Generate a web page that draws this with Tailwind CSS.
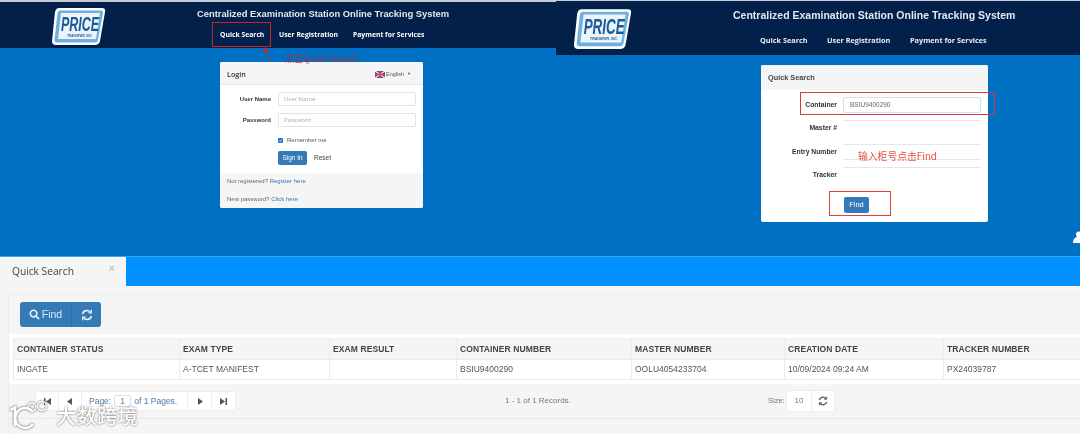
<!DOCTYPE html>
<html>
<head>
<meta charset="utf-8">
<script src="https://cdn.jsdelivr.net/npm/@tailwindcss/browser@4"></script>
</head>
<body class="bg-white m-0">
<div class="relative w-[1080px] h-[434px] overflow-hidden font-['Liberation_Sans',sans-serif] blur-[0.5px]">
  <!-- Top: two screenshots -->
  <div class="grid grid-cols-[556px_524px] h-[256px] bg-[#0070c3]">
    <!-- Left -->
    <div class="flex flex-col">
      <div class="h-[2px] bg-[#c9ced6]"></div>
      <div class="h-[46px] bg-[#03204a] flex items-start">
        <svg class="ml-[51px] mt-[4px] w-[56px] h-[40px]" viewBox="0 0 56 40">
          <path d="M8 2 H51 Q55 2 54 6 L49 35 Q48 39 44 39 H5 Q1 39 1 35 L4 6 Q5 2 8 2Z" fill="#fff"/>
          <path d="M9 4.500 H50 Q52.500 4.500 52 7 L47 34 Q46.500 36.500 44 36.500 H6 Q3.500 36.500 3.500 34 L6.500 7 Q7 4.500 9 4.500Z" fill="#6fb0dc"/>
          <path d="M10 7 H49 L45 33 H7Z" fill="#eaf4fa"/>
          <text transform="translate(10 25) scale(1 1.65)" font-family="Liberation Sans" font-weight="700" font-style="italic" font-size="12.500" fill="#1a5a98">PRICE</text>
          <text transform="translate(16 31) scale(0.9 1)" font-family="Liberation Sans" font-weight="700" font-style="italic" font-size="3.600" fill="#1a5a98">TRANSFER, INC.</text>
        </svg>
        <div class="ml-[90px] w-[252px] flex flex-col items-center">
          <div class="mt-[5px] text-[9.400px] leading-[13px] font-bold text-[#e4e8ee] whitespace-nowrap">Centralized Examination Station Online Tracking System</div>
          <div class="mt-[10px] flex gap-[15px] self-start ml-[23px] text-[6.800px] leading-[10px] font-bold text-white font-['Open_Sans',sans-serif] whitespace-nowrap">
            <span class="w-[44px]">Quick Search</span><span class="w-[59px]">User Registration</span><span>Payment for Services</span>
          </div>
        </div>
      </div>
      <div class="mt-[14px] ml-[220px] w-[203px] h-[146px] bg-white rounded-[2px] flex flex-col overflow-hidden">
        <div class="h-[23px] bg-[#f5f5f5] border-b border-[#e8e8e8] flex items-center justify-between pl-[7px] pr-[12px] pt-[2px] text-[7px] text-[#333]">
          <span class="font-['Open_Sans',sans-serif] font-semibold text-[7.200px]">Login</span>
          <span class="flex items-center gap-[1px] text-[5.500px] text-[#555]">
            <svg class="w-[10px] h-[7px]" viewBox="0 0 10 7"><rect width="10" height="7" rx="1" fill="#5a4a8a"/><path d="M0 0 L10 7 M10 0 L0 7" stroke="#f3d5de" stroke-width="1.400"/><path d="M5 0 V7 M0 3.500 H10" stroke="#d43a5a" stroke-width="1.500"/></svg>
            English <span class="ml-[2px] text-[4px]">▼</span>
          </span>
        </div>
        <div class="flex-1 flex flex-col">
          <div class="mt-[7px] flex items-center h-[14px]">
            <label class="w-[51px] text-right text-[6px] font-bold text-[#333]">User Name</label>
            <div class="ml-[7px] w-[138px] h-[14px] border border-[#e2e2e2] rounded-[2px] pl-[5px] text-[6px] leading-[12px] text-[#aaa] font-['Open_Sans',sans-serif]">User Name</div>
          </div>
          <div class="mt-[7px] flex items-center h-[14px]">
            <label class="w-[51px] text-right text-[6px] font-bold text-[#333]">Password</label>
            <div class="ml-[7px] w-[138px] h-[14px] border border-[#e2e2e2] rounded-[2px] pl-[5px] text-[6px] leading-[12px] text-[#aaa] font-['Open_Sans',sans-serif]">Password</div>
          </div>
          <div class="mt-[9px] ml-[58px] flex items-center h-[8px] text-[6px] text-[#555]">
            <svg class="w-[5px] h-[5px]" viewBox="0 0 5 5"><rect width="5" height="5" rx="1" fill="#1f6fd0"/><path d="M1 2.500 L2.200 3.700 L4 1.300" fill="none" stroke="#fff" stroke-width="0.800"/></svg>
            <span class="ml-[4px]">Remember me</span>
          </div>
          <div class="mt-[7px] ml-[58px] flex items-center h-[14px] gap-[3px] text-[6.500px]">
            <span class="w-[29px] h-[14px] bg-[#337ab7] rounded-[2px] text-white flex items-center justify-center">Sign In</span>
            <span class="w-[25px] h-[14px] flex items-center justify-center text-[#444]">Reset</span>
          </div>
        </div>
        <div class="h-[35px] bg-[#f5f5f5] pl-[7px] pt-[4px] text-[6px] leading-[8px] text-[#666]">
          <div>Not registered? <span class="text-[#3a74ad]">Register here</span></div>
          <div class="mt-[10px]">New password? <span class="text-[#3a74ad]">Click here</span></div>
        </div>
      </div>
    </div>
    <!-- Right -->
    <div class="flex flex-col">
      <div class="h-[1px] bg-[#c9ced6]"></div>
      <div class="h-[54px] bg-[#03204a] flex items-start">
        <svg class="ml-[15px] mt-[6px] w-[64px] h-[43px]" viewBox="0 0 56 40">
          <path d="M8 2 H51 Q55 2 54 6 L49 35 Q48 39 44 39 H5 Q1 39 1 35 L4 6 Q5 2 8 2Z" fill="#fff"/>
          <path d="M9 4.500 H50 Q52.500 4.500 52 7 L47 34 Q46.500 36.500 44 36.500 H6 Q3.500 36.500 3.500 34 L6.500 7 Q7 4.500 9 4.500Z" fill="#6fb0dc"/>
          <path d="M10 7 H49 L45 33 H7Z" fill="#eaf4fa"/>
          <text transform="translate(10 25) scale(1 1.65)" font-family="Liberation Sans" font-weight="700" font-style="italic" font-size="12.500" fill="#1a5a98">PRICE</text>
          <text transform="translate(16 31) scale(0.9 1)" font-family="Liberation Sans" font-weight="700" font-style="italic" font-size="3.600" fill="#1a5a98">TRANSFER, INC.</text>
        </svg>
        <div class="ml-[98px] w-[284px] flex flex-col">
          <div class="mt-[7px] text-[10.500px] leading-[14px] font-bold text-[#e4e8ee] whitespace-nowrap">Centralized Examination Station Online Tracking System</div>
          <div class="mt-[13px] ml-[27px] flex gap-[17px] text-[7.300px] leading-[10px] font-bold text-[#e8edf3] font-['Open_Sans',sans-serif] whitespace-nowrap">
            <span class="w-[50px]">Quick Search</span><span class="w-[66px]">User Registration</span><span>Payment for Services</span>
          </div>
        </div>
      </div>
      <div class="mt-[10px] ml-[205px] w-[227px] h-[157px] bg-white rounded-[2px] flex flex-col overflow-hidden">
        <div class="h-[25px] bg-[#f5f5f5] flex items-center pl-[7px] pt-[2px] text-[7.300px] font-bold text-[#444]">Quick Search</div>
        <div class="flex flex-col gap-[7.330px] pt-[7px]">
          <div class="flex items-center h-[16px]">
            <label class="w-[76px] text-right text-[6.800px] font-bold text-[#333]">Container</label>
            <div class="ml-[6px] w-[138px] h-[16px] border border-[#cfe3f7] rounded-[2px] pl-[6px] text-[6.500px] leading-[14px] text-[#666]">BSIU9400290</div>
          </div>
          <div class="flex items-center h-[16px]">
            <label class="w-[76px] text-right text-[6.800px] font-bold text-[#333]">Master #</label>
            <div class="ml-[6px] w-[138px] h-[16px] border-t border-[#e6e6e6]"></div>
          </div>
          <div class="flex items-center h-[16px]">
            <label class="w-[76px] text-right text-[6.800px] font-bold text-[#333]">Entry Number</label>
            <div class="ml-[6px] w-[138px] h-[16px] border-y border-[#e6e6e6]"></div>
          </div>
          <div class="flex items-center h-[16px]">
            <label class="w-[76px] text-right text-[6.800px] font-bold text-[#333]">Tracker</label>
            <div class="ml-[6px] w-[138px] h-[16px] border-t border-[#e6e6e6]"></div>
          </div>
        </div>
        <div class="mt-[14px] ml-[83px] w-[25px] h-[16px] bg-[#337ab7] rounded-[2px] text-white text-[7.500px] flex items-center justify-center">Find</div>
      </div>
    </div>
  </div>

  <!-- Bottom panel -->
  <div class="h-[178px] bg-[#f5f5f5] flex flex-col">
    <div class="h-[1px] bg-[#3aa4f5]"></div>
    <div class="h-[29px] bg-[#0090ff] flex">
      <div class="w-[126px] bg-[#f5f5f5] flex items-center justify-between pl-[12px] pr-[11px]">
        <span class="text-[10.200px] text-[#444] font-['Open_Sans',sans-serif]">Quick Search</span>
        <span class="text-[11px] leading-none font-bold text-[#c4c4c4] -mt-[6px]">×</span>
      </div>
    </div>
    <div class="mt-[8px] ml-[8px] flex-1 border-t border-l border-[#ececec] flex flex-col">
      <div class="h-[39px] pt-[7px] pl-[11px]">
        <div class="w-[81px] h-[25px] bg-[#337ab7] rounded-[3px] flex text-[#dbe8f3]">
          <div class="w-[52px] border-r border-[#2e6da4] flex items-center justify-center gap-[2px] text-[10.500px]">
            <svg class="w-[11px] h-[11px]" viewBox="0 0 12 12" fill="none" stroke="#e6eff6" stroke-width="1.800"><circle cx="5" cy="5" r="3.600"/><path d="M7.700 7.700 L11 11"/></svg>
            <span>Find</span>
          </div>
          <div class="flex-1 flex items-center justify-center">
            <svg class="w-[12px] h-[12px]" viewBox="0 0 12 12" fill="none" stroke="#e6eff6" stroke-width="1.600"><path d="M1.500 5 A4.600 4.600 0 0 1 9.600 3.300"/><path d="M10.500 7 A4.600 4.600 0 0 1 2.400 8.700"/><path d="M10.400 0.800 V3.800 H7.400" stroke-width="1.200"/><path d="M1.600 11.200 V8.200 H4.600" stroke-width="1.200"/></svg>
          </div>
        </div>
      </div>
      <div class="h-[50px] bg-white pl-[4px] pt-[4px] overflow-hidden">
        <table class="table-fixed border-collapse w-[1100px] text-[8.500px] text-[#555]">
          <colgroup><col class="w-[166px]"><col class="w-[150px]"><col class="w-[127px]"><col class="w-[175px]"><col class="w-[153px]"><col class="w-[159px]"><col></colgroup>
          <thead>
            <tr class="h-[21px] bg-[#f5f5f5] text-left font-bold text-[#444] tracking-[0.1px]">
              <th class="border border-[#ececec] pl-[3px]">CONTAINER STATUS</th>
              <th class="border border-[#ececec] pl-[3px]">EXAM TYPE</th>
              <th class="border border-[#ececec] pl-[3px]">EXAM RESULT</th>
              <th class="border border-[#ececec] pl-[3px]">CONTAINER NUMBER</th>
              <th class="border border-[#ececec] pl-[3px]">MASTER NUMBER</th>
              <th class="border border-[#ececec] pl-[3px]">CREATION DATE</th>
              <th class="border border-[#ececec] pl-[3px]">TRACKER NUMBER</th>
            </tr>
          </thead>
          <tbody>
            <tr class="h-[20px] bg-white">
              <td class="border border-[#ececec] pl-[3px]">INGATE</td>
              <td class="border border-[#ececec] pl-[3px]">A-TCET MANIFEST</td>
              <td class="border border-[#ececec] pl-[3px]"></td>
              <td class="border border-[#ececec] pl-[3px]">BSIU9400290</td>
              <td class="border border-[#ececec] pl-[3px]">OOLU4054233704</td>
              <td class="border border-[#ececec] pl-[3px]">10/09/2024 09:24 AM</td>
              <td class="border border-[#ececec] pl-[3px]">PX24039787</td>
            </tr>
          </tbody>
        </table>
      </div>
      <div class="h-[35px] border-b border-[#e6e6e6] flex items-center text-[8px] text-[#777]">
        <div class="ml-[26px] w-[201px] h-[20px] flex bg-white rounded-[2px] border border-[#eeeeee] items-center text-[#5a6b80]">
          <span class="w-[23px] h-full border-r border-[#eee] flex items-center justify-center text-[6px] text-[#555]">
            <svg class="w-[7px] h-[7px]" viewBox="0 0 7 7" fill="#555"><rect x="0" y="0" width="1.500" height="7"/><path d="M7 0 V7 L2 3.500Z"/></svg>
          </span>
          <span class="w-[23px] h-full border-r border-[#eee] flex items-center justify-center">
            <svg class="w-[6px] h-[7px]" viewBox="0 0 6 7" fill="#555"><path d="M5 0 V7 L0 3.500Z"/></svg>
          </span>
          <span class="w-[106px] h-full border-r border-[#eee] flex items-center pl-[7px] text-[8.500px] text-[#4a78ab] whitespace-nowrap">Page:<span class="mx-[3px] w-[17px] h-[12px] border border-[#ddd] rounded-[2px] flex items-center justify-center text-[#777]">1</span>of 1 Pages.</span>
          <span class="w-[24px] h-full border-r border-[#eee] flex items-center justify-center">
            <svg class="w-[6px] h-[7px]" viewBox="0 0 6 7" fill="#555"><path d="M1 0 V7 L6 3.500Z"/></svg>
          </span>
          <span class="flex-1 h-full flex items-center justify-center">
            <svg class="w-[7px] h-[7px]" viewBox="0 0 7 7" fill="#555"><rect x="5.500" y="0" width="1.500" height="7"/><path d="M0 0 V7 L5 3.500Z"/></svg>
          </span>
        </div>
        <span class="ml-[269px] w-[66px] whitespace-nowrap">1 - 1 of 1 Records.</span>
        <span class="ml-[197px] w-[18px] text-[7.500px]">Size:</span>
        <div class="w-[49px] h-[22px] flex bg-white rounded-[2px] border border-[#eeeeee] items-center">
          <span class="w-[25px] h-full border-r border-[#eee] flex items-center justify-center text-[#777]">10</span>
          <span class="flex-1 flex items-center justify-center">
            <svg class="w-[10px] h-[10px]" viewBox="0 0 12 12" fill="none" stroke="#555" stroke-width="1.500"><path d="M1.500 5 A4.600 4.600 0 0 1 9.600 3.300"/><path d="M10.500 7 A4.600 4.600 0 0 1 2.400 8.700"/><path d="M10.400 0.800 V3.800 H7.400" stroke-width="1.200"/><path d="M1.600 11.200 V8.200 H4.600" stroke-width="1.200"/></svg>
          </span>
        </div>
      </div>
    </div>
  </div>

  <!-- Annotations over the screenshots -->
  <div class="absolute left-[212px] top-[22px] w-[59px] h-[25px] border-[1.500px] border-[#c8242b]"></div>
  <svg class="absolute left-[262px] top-[47px] w-[12px] h-[16px]" viewBox="0 0 12 16" fill="none"><path d="M8 14 L3.500 3" stroke="#c8242b" stroke-width="1"/><path d="M1 5 L3 0 L6.500 4Z" fill="#c8242b"/></svg>
  <div class="absolute left-[285px] top-[53px] text-[9px] leading-[12px] text-[#b8283a]/85 font-['Noto_Sans_CJK_SC',sans-serif] whitespace-nowrap">点击Quick Search</div>
  <div class="absolute left-[800px] top-[92px] w-[195px] h-[23px] border-[1.500px] border-[#d43a3a]"></div>
  <div class="absolute left-[829px] top-[191px] w-[62px] h-[25px] border-[1.500px] border-[#e2403a]"></div>
  <div class="absolute left-[858px] top-[149px] text-[9.800px] leading-[14px] text-[#e8503f] font-['Noto_Sans_CJK_SC',sans-serif] whitespace-nowrap">输入柜号点击Find</div>
  <svg class="absolute left-[1073px] top-[231px] w-[7px] h-[13px]" viewBox="0 0 7 13" fill="#fff"><circle cx="6" cy="3.500" r="3"/><path d="M0 12 Q0 7 4 6 H7 V12Z"/></svg>

  <!-- Watermark -->
  <div class="absolute left-[9px] top-[400px] flex items-center text-white [text-shadow:0_0_2px_rgba(70,70,70,0.9)]">
    <svg class="w-[40px] h-[30px] drop-shadow-[0_0_1px_rgba(60,60,60,0.9)]" viewBox="0 0 40 30" fill="none" stroke="#fff" stroke-width="2.600"><path d="M1.500 10 L6 7.500 V26"/><path d="M24 12 A10 10 0 1 0 24 24"/><circle cx="23" cy="7" r="4" stroke-width="1.400"/><circle cx="33" cy="6" r="4.500" stroke-width="1.400"/></svg>
    <span class="ml-[7px] text-[20.500px] leading-[26px] font-['Noto_Sans_CJK_SC',sans-serif] font-medium whitespace-nowrap">大数跨境</span>
  </div>
</div>
</body>
</html>
